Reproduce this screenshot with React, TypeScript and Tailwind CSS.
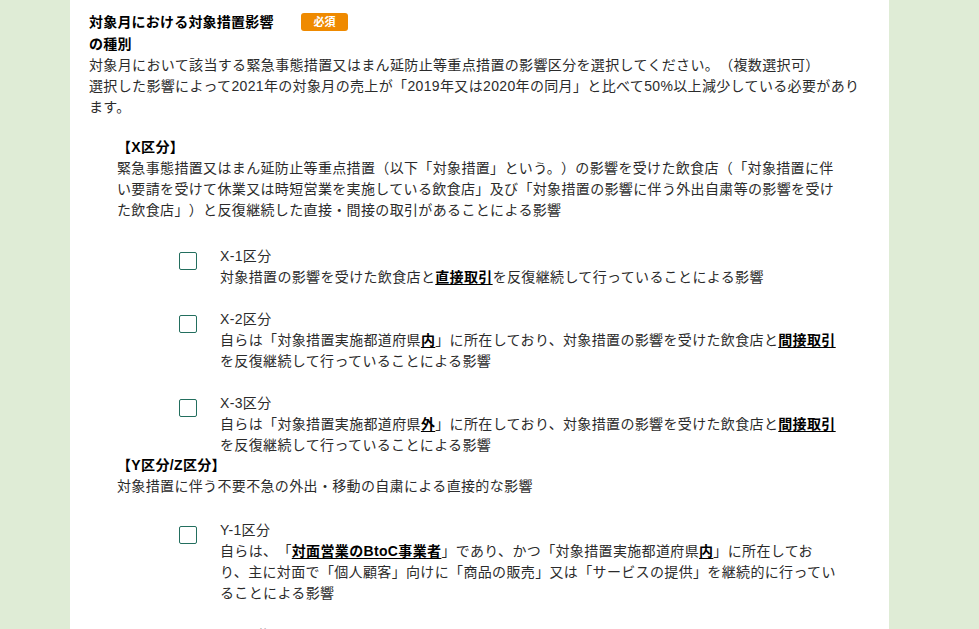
import { ReactNode } from "react";

type Item = { label: string; body: ReactNode };

const U = ({ children }: { children: ReactNode }) => (
  <span className="font-bold text-black underline underline-offset-2">{children}</span>
);

const xItems: Item[] = [
  {
    label: "X-1区分",
    body: (
      <>
        対象措置の影響を受けた飲食店と<U>直接取引</U>を反復継続して行っていることによる影響
      </>
    ),
  },
  {
    label: "X-2区分",
    body: (
      <>
        自らは「対象措置実施都道府県<U>内</U>」に所在しており、対象措置の影響を受けた飲食店と<U>間接取引</U>を反復継続して行っていることによる影響
      </>
    ),
  },
  {
    label: "X-3区分",
    body: (
      <>
        自らは「対象措置実施都道府県<U>外</U>」に所在しており、対象措置の影響を受けた飲食店と<U>間接取引</U>を反復継続して行っていることによる影響
      </>
    ),
  },
];

const yItems: Item[] = [
  {
    label: "Y-1区分",
    body: (
      <>
        自らは、「<U>対面営業のBtoC事業者</U>」であり、かつ「対象措置実施都道府県<U>内</U>」に所在しており、主に対面で「個人顧客」向けに「商品の販売」又は「サービスの提供」を継続的に行っていることによる影響
      </>
    ),
  },
  {
    label: "Y-2区分",
    body: (
      <>
        自らは、「<U>対面営業のBtoC事業者</U>」であり、かつ「対象措置実施都道府県<U>外</U>」に所在しており、対象措置実施都道府県内に所在する顧客に対して継続的に行っていることによる影響
      </>
    ),
  },
];

function CheckRow({ item, className }: { item: Item; className?: string }) {
  return (
    <label className={`flex gap-[23px] pl-[62px] ${className ?? ""}`}>
      <span className="mt-[6px] block size-[18px] shrink-0 rounded-[2px] border-[1.5px] border-[#236e5e] bg-white" />
      <div>
        <div>{item.label}</div>
        <div>{item.body}</div>
      </div>
    </label>
  );
}

export default function App() {
  return (
    <div
      className="min-h-screen bg-[#dfecd6] text-[14px] leading-[21px] tracking-[0.35px] text-[#2b2b2b] [text-spacing-trim:space-all]"
      style={{ fontFamily: '"Liberation Sans", "Noto Sans CJK JP", sans-serif' }}
    >
      <div className="ml-[70px] min-h-screen w-[819px] bg-white pl-[19px] pr-[21px] pt-[11px] pb-10">
        {/* heading */}
        <div className="flex items-start">
          <h2 className="w-[192px] font-bold leading-[22px] tracking-[0.2px] text-black">対象月における対象措置影響の種別</h2>
          <span className="ml-[20px] mt-[2px] flex h-[18px] w-[47px] items-center justify-center rounded-[3px] bg-[#ef8a00] text-[11px] font-bold leading-none tracking-normal text-white">
            必須
          </span>
        </div>
        <p>対象月において該当する緊急事態措置又はまん延防止等重点措置の影響区分を選択してください。（複数選択可）</p>
        <p>選択した影響によって2021年の対象月の売上が「2019年又は2020年の同月」と比べて50%以上減少している必要があります。</p>

        <div className="mt-[19px] pl-[28px] pr-[28px]">
          <div className="font-bold text-black">【X区分】</div>
          <p>
            緊急事態措置又はまん延防止等重点措置（以下「対象措置」という。）の影響を受けた飲食店（「対象措置に伴い要請を受けて休業又は時短営業を実施している飲食店」及び「対象措置の影響に伴う外出自粛等の影響を受けた飲食店」）と反復継続した直接・間接の取引があることによる影響
          </p>
          <div className="mt-[25px]">
            {xItems.map((it, i) => (
              <CheckRow key={it.label} item={it} className={i > 0 ? "mt-[21px]" : ""} />
            ))}
          </div>
        </div>

        <div className="-mt-[1px] pl-[28px] pr-[28px]">
          <div className="font-bold text-black">【Y区分/Z区分】</div>
          <p>対象措置に伴う不要不急の外出・移動の自粛による直接的な影響</p>
          <div className="mt-[23px]">
            {yItems.map((it, i) => (
              <CheckRow key={it.label} item={it} className={i > 0 ? "mt-[21px]" : ""} />
            ))}
          </div>
        </div>
      </div>
    </div>
  );
}
